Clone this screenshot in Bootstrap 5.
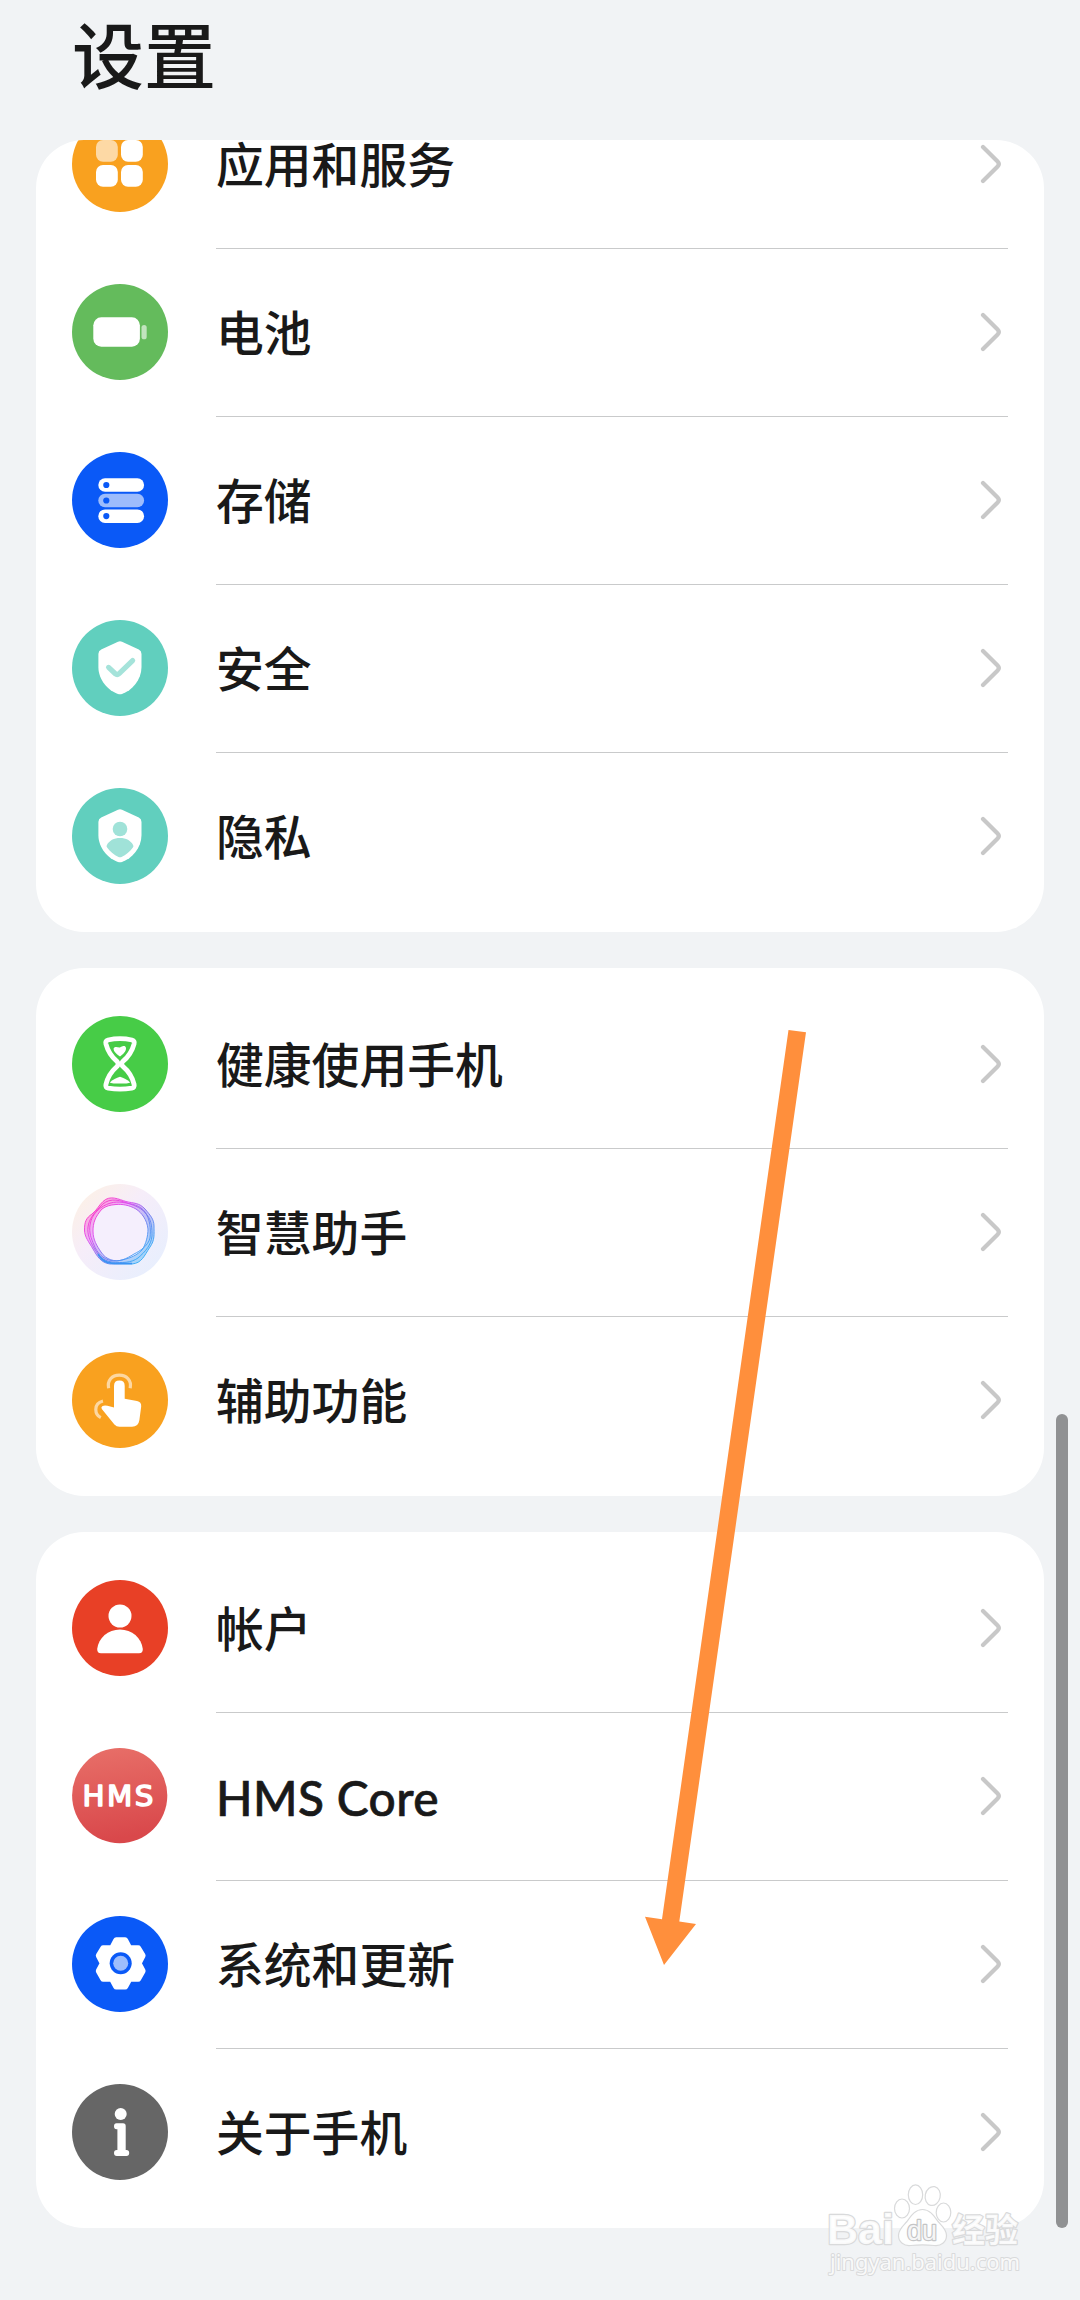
<!DOCTYPE html>
<html lang="zh-CN">
<head>
<meta charset="utf-8">
<meta name="viewport" content="width=device-width, initial-scale=1">
<title>设置</title>
<link href="https://cdn.jsdelivr.net/npm/bootstrap@5.3.0/dist/css/bootstrap.min.css" rel="stylesheet">
<style>
  body { background: #f1f3f5; color: #191919; font-family: "Noto Sans CJK SC", sans-serif; }
  .phone { width: 1080px; height: 2300px; }
  .page-head { height: 140px; padding: 0 72px; }
  .page-head h1 { font-size: 72px; font-weight: 500; line-height: 104px; }
  .groups { padding: 0 36px; gap: 36px; }
  .group { border-radius: 48px; padding: 12px 36px; --bs-list-group-bg: #fff; }
  .group.scrolled { height: 792px; padding-top: 0; }
  .setting { height: 168px; gap: 48px; color: #191919; }
  .setting .line { box-shadow: inset 0 1px #c9cacb; padding: 0 6px 3px 0; }
  .setting:first-child .line { box-shadow: none; }
  .label-text { font-size: 47.8px; font-weight: 500; line-height: 72px; }
  .label-latin { font-family: Lato, sans-serif; font-weight: 500; letter-spacing: .4px; padding-top: 6px; -webkit-text-stroke: .7px #191919; }
  .ico { width: 96px; height: 96px; flex: none; }
  .chev { width: 22px; height: 40px; margin-top: 3px; }
  .arrow { left: 640px; top: 1020px; width: 180px; height: 960px; }
  .scroll-thumb { left: 1056px; top: 1414px; width: 12px; height: 814px; background: #909193; }
  .watermark { left: 820px; top: 2170px; width: 220px; height: 120px; }
</style>
</head>
<body>
<svg class="d-none">
  <symbol id="chev" viewBox="0 0 22 40"><path d="M3 3 17.6 17.6Q20 20 17.6 22.4L3 37" fill="none" stroke="#c8c8c8" stroke-width="4.2" stroke-linecap="round"/></symbol>
</svg>
<div class="phone position-relative overflow-hidden">
  <header class="page-head"><h1 class="m-0">设置</h1></header>
  <main class="groups d-flex flex-column">

    <section class="group scrolled list-group bg-white overflow-hidden justify-content-end">
      <div class="setting d-flex align-items-center flex-shrink-0">
        <svg class="ico" viewBox="0 0 96 96"><circle cx="48" cy="48" r="48" fill="#f9a11f"/><g fill="#fff"><rect x="24" y="24" width="21.8" height="21.8" rx="7" opacity=".6"/><rect x="49" y="24" width="21.8" height="21.8" rx="7"/><rect x="24" y="49" width="21.8" height="21.8" rx="7"/><rect x="49" y="49" width="21.8" height="21.8" rx="7"/></g></svg>
        <div class="line d-flex flex-grow-1 h-100 align-items-center justify-content-between"><span class="label-text">应用和服务</span><svg class="chev"><use href="#chev"/></svg></div>
      </div>
      <div class="setting d-flex align-items-center flex-shrink-0">
        <svg class="ico" viewBox="0 0 96 96"><circle cx="48" cy="48" r="48" fill="#64bb5c"/><rect x="21.3" y="33.3" width="46.6" height="29.4" rx="8" fill="#fff"/><rect x="69.5" y="41" width="5.2" height="14.3" rx="2.6" fill="#fff" opacity=".6"/></svg>
        <div class="line d-flex flex-grow-1 h-100 align-items-center justify-content-between"><span class="label-text">电池</span><svg class="chev"><use href="#chev"/></svg></div>
      </div>
      <div class="setting d-flex align-items-center flex-shrink-0">
        <svg class="ico" viewBox="0 0 96 96"><circle cx="48" cy="48" r="48" fill="#0a59f7"/><g fill="#fff"><rect x="26.3" y="26.2" width="45.8" height="13.5" rx="6.7"/><rect x="26.3" y="41.8" width="45.8" height="13.5" rx="6.7" opacity=".6"/><rect x="26.3" y="57.4" width="45.8" height="13.5" rx="6.7"/></g><g fill="#0a59f7"><circle cx="34.3" cy="33" r="3.1"/><circle cx="34.3" cy="48.5" r="3.1"/><circle cx="34.3" cy="64.1" r="3.1"/></g></svg>
        <div class="line d-flex flex-grow-1 h-100 align-items-center justify-content-between"><span class="label-text">存储</span><svg class="chev"><use href="#chev"/></svg></div>
      </div>
      <div class="setting d-flex align-items-center flex-shrink-0">
        <svg class="ico" viewBox="0 0 96 96"><circle cx="48" cy="48" r="48" fill="#61cfbe"/><path d="M46 21.8Q48 20.9 50 21.8L66.8 29.6Q69.5 31 69.5 34V47C69.5 60 60 70.5 50 74Q48 74.7 46 74C36 70.5 26.4 60 26.4 47V34Q26.4 31 29.2 29.6Z" fill="#fff"/><path d="M36.6 47.4 43.3 53.7Q45.2 55.3 47.1 53.6L60.6 40.6" fill="none" stroke="#a5e3da" stroke-width="5.2" stroke-linecap="round"/></svg>
        <div class="line d-flex flex-grow-1 h-100 align-items-center justify-content-between"><span class="label-text">安全</span><svg class="chev"><use href="#chev"/></svg></div>
      </div>
      <div class="setting d-flex align-items-center flex-shrink-0">
        <svg class="ico" viewBox="0 0 96 96"><circle cx="48" cy="48" r="48" fill="#61cfbe"/><path d="M46 21.8Q48 20.9 50 21.8L66.8 29.6Q69.5 31 69.5 34V47C69.5 60 60 70.5 50 74Q48 74.7 46 74C36 70.5 26.4 60 26.4 47V34Q26.4 31 29.2 29.6Z" fill="#fff"/><g fill="#a0e2d8"><circle cx="48" cy="41" r="7.3"/><path d="M34.8 57.2C37 52.6 42 50 48 50S59 52.6 61.2 57.2Q61.8 58.4 60.9 59.6C57.8 63.8 54 67 49.5 69Q48 69.7 46.5 69C42 67 38.2 63.8 35.1 59.6Q34.2 58.4 34.8 57.2Z"/></g></svg>
        <div class="line d-flex flex-grow-1 h-100 align-items-center justify-content-between"><span class="label-text">隐私</span><svg class="chev"><use href="#chev"/></svg></div>
      </div>
    </section>

    <section class="group list-group bg-white">
      <div class="setting d-flex align-items-center">
        <svg class="ico" viewBox="0 0 96 96"><circle cx="48" cy="48" r="48" fill="#47cc47"/><path d="M36 24Q48 21.4 60 24Q62.8 24.8 62.1 27.8C60.2 35 56.3 41 50.6 45.6Q48.8 48 50.6 50.2C56.3 55 60.4 61 62.1 68.4Q62.8 71.6 59.8 72.2Q48 74 36.2 72.2Q33.2 71.6 33.9 68.4C35.6 61 39.7 55 45.2 50.2Q47 48 45.2 45.6C39.7 41 35.8 35 33.9 27.8Q33.2 24.8 36 24Z" fill="none" stroke="#fff" stroke-width="4.8"/><path d="M41.6 32.6C43 30 45.4 31.6 48 31.4C50.6 30 53.4 29 54 32C54.4 35.6 50.6 38.6 48 40.4C45.4 38.8 41.4 36 41.6 32.6Z" fill="#fff"/><path d="M37.8 66.4C40.5 64 44.5 61.6 48 60.8C51.5 61.6 55.5 64 58.2 66.4C56 68 40 68 37.8 66.4Z" fill="#fff"/></svg>
        <div class="line d-flex flex-grow-1 h-100 align-items-center justify-content-between"><span class="label-text">健康使用手机</span><svg class="chev"><use href="#chev"/></svg></div>
      </div>
      <div class="setting d-flex align-items-center">
        <svg class="ico" viewBox="0 0 96 96">
          <defs>
            <linearGradient id="halo" x1="0" y1=".1" x2=".9" y2="1"><stop offset="0" stop-color="#fdf1e4"/><stop offset=".4" stop-color="#f6edf9"/><stop offset="1" stop-color="#e6effe"/></linearGradient>
            <linearGradient id="ring" gradientUnits="userSpaceOnUse" x1="22" y1="24" x2="70" y2="74"><stop offset="0" stop-color="#fb35c4"/><stop offset=".28" stop-color="#dd48ee"/><stop offset=".55" stop-color="#7a70ee"/><stop offset="1" stop-color="#2faaf6"/></linearGradient>
          </defs>
          <circle cx="48" cy="48" r="48" fill="url(#halo)"/><circle cx="47.5" cy="48" r="30" fill="#f5effd"/>
          <path fill="url(#ring)" fill-opacity=".38" fill-rule="evenodd" d="M31 17.5C38 10.5 47 15.5 54 17.5C62 19.5 67 18.5 73 25C78 31 82 35 82 42C82 50 83 56 78 63C72 72 70 79 60 80H38C29 79 25 72 21 65C17 58 12.5 53 12.5 46C12.5 38 14 34 20 30C25 26 27 21 31 17.5ZM30 25C23 33 21 39 21 47C21 56 25 62 29 68C34 76 43 78 50 76C59 74 65 71 70 66C74 60 76 52 76 45C75 36 70 29 64 25C57 21 50 20 44 20.5C38 21 34 22 30 25Z"/>
          <g fill="none" stroke="url(#ring)" stroke-width="1" stroke-opacity=".9">
            <path d="M31 17.5C38 10.5 47 15.5 54 17.5C62 19.5 67 18.5 73 25C78 31 82 35 82 42C82 50 83 56 78 63C72 72 70 79 60 80H38C29 79 25 72 21 65C17 58 12.5 53 12.5 46C12.5 38 14 34 20 30C25 26 27 21 31 17.5Z"/>
            <path d="M28 23C35 14 45 15 55 19C64 22 70 24 75 31C80 37 80 45 80 52C79 61 74 67 66 74C59 79 50 79 40 78C31 77 26 71 22 64C18 57 15 50 16 43C17 35 22 29 28 23Z"/>
            <path d="M25 27C33 19 43 17 51 18.5C60 20 68 21 73 28C78 35 79 45 78 54C76 62 68 67 62 70C54 75 48 78 39 76.5C31 75 25 69 22 61C19 54 17 49 18 41C19 35 21 31 25 27Z"/>
            <path d="M30 25C23 33 21 39 21 47C21 56 25 62 29 68C34 76 43 78 50 76C59 74 65 71 70 66C74 60 76 52 76 45C75 36 70 29 64 25C57 21 50 20 44 20.5C38 21 34 22 30 25Z"/>
          </g>
          <path d="M26 70C31 79 38 79.5 46 79.5H60" fill="none" stroke="#3b93f3" stroke-width="1.6"/>
        </svg>
        <div class="line d-flex flex-grow-1 h-100 align-items-center justify-content-between"><span class="label-text">智慧助手</span><svg class="chev"><use href="#chev"/></svg></div>
      </div>
      <div class="setting d-flex align-items-center">
        <svg class="ico" viewBox="0 0 96 96"><circle cx="48" cy="48" r="48" fill="#f9a11f"/><path d="M42 34Q42 28.6 47.4 28.6T52.7 34V46.8L65 49Q69.6 50 69.2 54.4L67.4 68Q66.4 74.8 60 74.8H47.5Q44.4 74.8 42.4 72.4L29.8 57Q28.6 55 30.6 54Q32.6 53 35.4 53.8L42 55.4Z" fill="#fff"/><g fill="none" stroke="#fff" stroke-opacity=".58" stroke-width="3.2"><path d="M36.6 36.2C35 28.4 40 23.2 47.3 23.2S59.8 28.4 58.2 36.2"/><path d="M31 49C27 50 23.8 53 23.8 57.4C23.8 61.5 25.5 64 28.8 65.6"/></g></svg>
        <div class="line d-flex flex-grow-1 h-100 align-items-center justify-content-between"><span class="label-text">辅助功能</span><svg class="chev"><use href="#chev"/></svg></div>
      </div>
    </section>

    <section class="group list-group bg-white">
      <div class="setting d-flex align-items-center">
        <svg class="ico" viewBox="0 0 96 96"><circle cx="48" cy="48" r="48" fill="#e84026"/><circle cx="48" cy="36" r="11.5" fill="#fff"/><path d="M25.2 69C26.5 58 36 49.6 48 49.6S69.5 58 70.8 69Q71 73.2 67 73.2H29Q25 73.2 25.2 69Z" fill="#fff"/></svg>
        <div class="line d-flex flex-grow-1 h-100 align-items-center justify-content-between"><span class="label-text">帐户</span><svg class="chev"><use href="#chev"/></svg></div>
      </div>
      <div class="setting d-flex align-items-center">
        <svg class="ico" viewBox="0 0 96 96"><defs><linearGradient id="hms" x1="0" y1="0" x2=".15" y2="1"><stop offset="0" stop-color="#e87069"/><stop offset="1" stop-color="#d9484b"/></linearGradient></defs><circle cx="47.7" cy="47.6" r="47.6" fill="url(#hms)"/><text x="10.4" y="58.4" font-family="DejaVu Sans, sans-serif" font-size="27.5" textLength="73.5" lengthAdjust="spacingAndGlyphs" letter-spacing="2.4" fill="#fff" stroke="#fff" stroke-width="1.5" stroke-linejoin="round">HMS</text></svg>
        <div class="line d-flex flex-grow-1 h-100 align-items-center justify-content-between"><span class="label-text label-latin">HMS Core</span><svg class="chev"><use href="#chev"/></svg></div>
      </div>
      <div class="setting d-flex align-items-center">
        <svg class="ico" viewBox="0 0 96 96"><circle cx="48" cy="48" r="48" fill="#0a59f7"/>
          <path d="M44.2 24.3H53.2L57.4 32.3H66.2L70.6 39.6L66.6 47.3L70.6 55L66.2 62.8H57.4L53.2 70.6H44.2L40 62.8H31.2L26.8 55L30.8 47.3L26.8 39.6L31.2 32.3H40Z" fill="#fff" stroke="#fff" stroke-width="6" stroke-linejoin="round"/><circle cx="48.7" cy="47.3" r="11" fill="#0a59f7"/><circle cx="48.7" cy="47.3" r="7.5" fill="#9dbdfc"/></svg>
        <div class="line d-flex flex-grow-1 h-100 align-items-center justify-content-between"><span class="label-text">系统和更新</span><svg class="chev"><use href="#chev"/></svg></div>
      </div>
      <div class="setting d-flex align-items-center">
        <svg class="ico" viewBox="0 0 96 96"><circle cx="48" cy="48" r="48" fill="#666"/><circle cx="48.7" cy="30" r="6" fill="#fff"/><path d="M44.5 39.3H51Q53.7 39.3 53.7 42V66H54.4Q57.2 66 57.2 69T54.4 72H44.8Q42 72 42 69T44.8 66H45.4V45.3H44.5Q42 45.3 42 42.3T44.5 39.3Z" fill="#fff"/></svg>
        <div class="line d-flex flex-grow-1 h-100 align-items-center justify-content-between"><span class="label-text">关于手机</span><svg class="chev"><use href="#chev"/></svg></div>
      </div>
    </section>
  </main>

  <svg class="arrow position-absolute" viewBox="640 1020 180 960"><path d="M788.5 1030 806 1032.3 679.3 1921.5 696 1924 664 1965 645 1916.7 662 1919.3Z" fill="#ff8f3c"/></svg>
  <div class="scroll-thumb position-absolute rounded-pill"></div>

  <svg class="watermark position-absolute" viewBox="820 2170 220 120">
    <g fill="#fff" fill-opacity=".85" stroke="#d9dadb" stroke-width="1.2" stroke-linejoin="round">
      <ellipse cx="902" cy="2208.5" rx="7.5" ry="9.5"/><ellipse cx="915.5" cy="2194.7" rx="7.2" ry="9.8"/><ellipse cx="932.7" cy="2196" rx="7.5" ry="9.5" transform="rotate(12 932.7 2196)"/><ellipse cx="943.5" cy="2212.5" rx="7.3" ry="9.5"/>
      <path d="M922.5 2209.5C930 2209.5 934 2216 938 2221.5C942 2226 946.5 2229 946.5 2235.5C946.5 2242 941 2246.5 934 2245.5C926 2244.5 919 2244.5 911 2245.5C904 2246.5 898.5 2242 898.5 2235.5C898.5 2229 903 2226 907 2221.5C911 2216 915 2209.5 922.5 2209.5Z"/>
      <g paint-order="stroke" stroke-width="2.4">
        <text x="827" y="2244" font-family="Liberation Sans, sans-serif" font-weight="700" font-size="43" textLength="67" lengthAdjust="spacingAndGlyphs">Bai</text>
        <text x="907" y="2240" font-family="Liberation Sans, sans-serif" font-weight="400" font-size="27" textLength="30" lengthAdjust="spacingAndGlyphs" stroke="#c4c5c6">du</text>
        <text x="952" y="2242" font-family="Noto Sans CJK SC, sans-serif" font-weight="700" font-size="33">经验</text>
        <text x="830" y="2270" font-family="Noto Sans, sans-serif" font-size="22.5" textLength="190" lengthAdjust="spacingAndGlyphs" stroke-width="2">jingyan.baidu.com</text>
      </g>
    </g>
  </svg>
</div>
<script src="https://cdn.jsdelivr.net/npm/bootstrap@5.3.0/dist/js/bootstrap.bundle.min.js"></script>
</body>
</html>
